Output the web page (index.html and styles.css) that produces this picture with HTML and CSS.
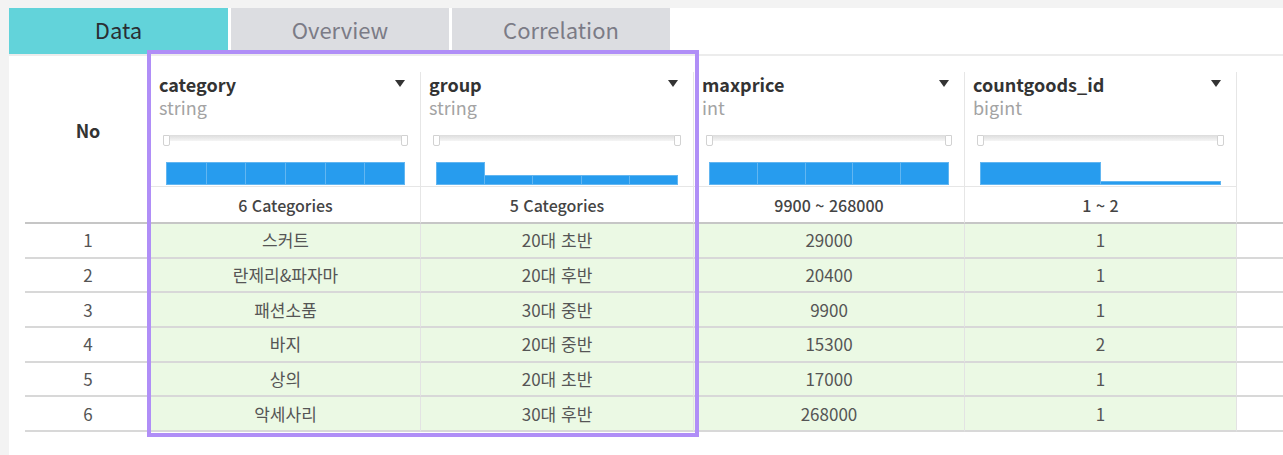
FILE: index.html
```html
<!DOCTYPE html>
<html lang="ko">
<head>
<meta charset="utf-8">
<link rel="stylesheet" href="styles.css">
</head>
<body>
<div class="panel">
  <div class="tabs">
    <div class="tab tab-active">Data</div>
    <div class="tab tab-wide">Overview</div>
    <div class="tab tab-wide">Correlation</div>
  </div>
  <div class="table">
    <div class="grid">
      <div class="hno">No</div>
      <div class="hcell">
        <div class="hname"><span>category</span><i class="caret"></i></div>
        <div class="htype">string</div>
        <div class="slider"><span class="handle"></span><span class="track"></span><span class="handle"></span></div>
        <div class="hist">
          <span class="bar" style="height:100%"></span><span class="bar" style="height:100%"></span><span class="bar" style="height:100%"></span><span class="bar" style="height:100%"></span><span class="bar" style="height:100%"></span><span class="bar" style="height:100%"></span>
        </div>
        <div class="summary">6 Categories</div>
      </div>
      <div class="hcell">
        <div class="hname"><span>group</span><i class="caret"></i></div>
        <div class="htype">string</div>
        <div class="slider"><span class="handle"></span><span class="track"></span><span class="handle"></span></div>
        <div class="hist">
          <span class="bar" style="height:100%"></span><span class="bar" style="height:42%"></span><span class="bar" style="height:42%"></span><span class="bar" style="height:42%"></span><span class="bar" style="height:42%"></span>
        </div>
        <div class="summary">5 Categories</div>
      </div>
      <div class="hcell">
        <div class="hname"><span>maxprice</span><i class="caret"></i></div>
        <div class="htype">int</div>
        <div class="slider"><span class="handle"></span><span class="track"></span><span class="handle"></span></div>
        <div class="hist">
          <span class="bar" style="height:100%"></span><span class="bar" style="height:100%"></span><span class="bar" style="height:100%"></span><span class="bar" style="height:100%"></span><span class="bar" style="height:100%"></span>
        </div>
        <div class="summary">9900 ~ 268000</div>
      </div>
      <div class="hcell">
        <div class="hname"><span>countgoods_id</span><i class="caret"></i></div>
        <div class="htype">bigint</div>
        <div class="slider"><span class="handle"></span><span class="track"></span><span class="handle"></span></div>
        <div class="hist">
          <span class="bar" style="height:100%"></span><span class="bar" style="height:18%"></span>
        </div>
        <div class="summary">1 ~ 2</div>
      </div>
      <div class="hrest"></div>

      <div class="cno">1</div><div class="cell">스커트</div><div class="cell">20대 초반</div><div class="cell">29000</div><div class="cell">1</div><div class="crest"></div>
      <div class="cno">2</div><div class="cell">란제리&amp;파자마</div><div class="cell">20대 후반</div><div class="cell">20400</div><div class="cell">1</div><div class="crest"></div>
      <div class="cno">3</div><div class="cell">패션소품</div><div class="cell">30대 중반</div><div class="cell">9900</div><div class="cell">1</div><div class="crest"></div>
      <div class="cno">4</div><div class="cell">바지</div><div class="cell">20대 중반</div><div class="cell">15300</div><div class="cell">2</div><div class="crest"></div>
      <div class="cno">5</div><div class="cell">상의</div><div class="cell">20대 초반</div><div class="cell">17000</div><div class="cell">1</div><div class="crest"></div>
      <div class="cno">6</div><div class="cell">악세사리</div><div class="cell">30대 후반</div><div class="cell">268000</div><div class="cell">1</div><div class="crest"></div>
    </div>
    <div class="selection"></div>
  </div>
</div>
</body>
</html>
```

FILE: styles.css
```css
* { box-sizing: border-box; }
html, body { margin: 0; padding: 0; }
body {
  background: #f3f3f3;
  font-family: "Noto Sans CJK KR", "Noto Sans", sans-serif;
  color: #555;
  width: 1283px;
  height: 455px;
  overflow: hidden;
}
.panel {
  margin: 8px 0 0 9px;
  background: #fff;
  height: 447px;
}
.tabs {
  display: flex;
  gap: 3px;
  height: 48px;
  border-bottom: 2px solid #ececec;
}
.tab {
  width: 218px;
  height: 46px;
  padding-bottom: 4px;
  background: #dcdde1;
  color: #7b7b86;
  font-size: 22px;
  display: flex;
  align-items: center;
  justify-content: center;
}
.tab-active {
  width: 219px;
  background: #62d3da;
  color: #2a2e33;
}
.table {
  position: relative;
  margin: 16px 0 0 16px;
}
.grid {
  display: grid;
  grid-template-columns: 126px 270px 273px 271px 272px 1fr;
}
.hno {
  display: flex;
  align-items: center;
  justify-content: center;
  font-weight: 700;
  font-size: 18px;
  color: #333;
  border-bottom: 2px solid #c6c6c6;
  padding-bottom: 35px;
}
.hrest { border-bottom: 2px solid #c6c6c6; }
.hcell {
  display: flex;
  flex-direction: column;
  border-right: 1px solid #e6e6e6;
  border-bottom: 2px solid #c6c6c6;
}
.hname {
  display: flex;
  justify-content: space-between;
  align-items: center;
  height: 23px;
  line-height: 20px;
  padding: 0 15px 0 8px;
  font-size: 18px;
  font-weight: 700;
  color: #333;
}
.caret {
  width: 0;
  height: 0;
  border-left: 5px solid transparent;
  border-right: 5px solid transparent;
  border-top: 7px solid #333;
}
.htype {
  height: 22px;
  line-height: 20px;
  padding-left: 8px;
  padding-top: 2px;
  font-size: 18px;
  color: #a3a3a3;
}
.slider {
  display: flex;
  align-items: flex-start;
  margin-top: 18px;
  padding: 0 12px;
  height: 11px;
}
.track {
  flex: 1;
  height: 6px;
  background: linear-gradient(#dcdcdc, #f5f5f5);
}
.handle {
  width: 7px;
  height: 11px;
  background: #fff;
  border: 1px solid #d2d2d2;
  border-radius: 0 0 2px 2px;
}
.hist {
  display: flex;
  align-items: flex-end;
  height: 41px;
  padding: 16px 15px 1px 15px;
  border-bottom: 1px solid #e6e6e6;
}
.bar {
  flex: 1;
  background: #279cee;
  border: 1px solid #62b6f1;
  border-left-width: 0;
}
.bar:first-child { border-left-width: 1px; }
.summary {
  height: 35px;
  display: flex;
  align-items: center;
  justify-content: center;
  font-size: 16px;
  font-weight: 500;
  color: #444;
}
.cno, .cell, .crest {
  height: 34.67px;
  border-bottom: 2px solid #d8d8d8;
  display: flex;
  align-items: center;
  justify-content: center;
  font-size: 17px;
  color: #555;
}
.cno { padding-bottom: 1px; }
.cell {
  background: #ebf9e4;
  border-right: 1px solid #e3e3e3;
  padding-bottom: 1px;
}
.selection {
  position: absolute;
  left: 122px;
  top: -22px;
  width: 552px;
  height: 387px;
  border: 4px solid #b08ef7;
  pointer-events: none;
}
```
